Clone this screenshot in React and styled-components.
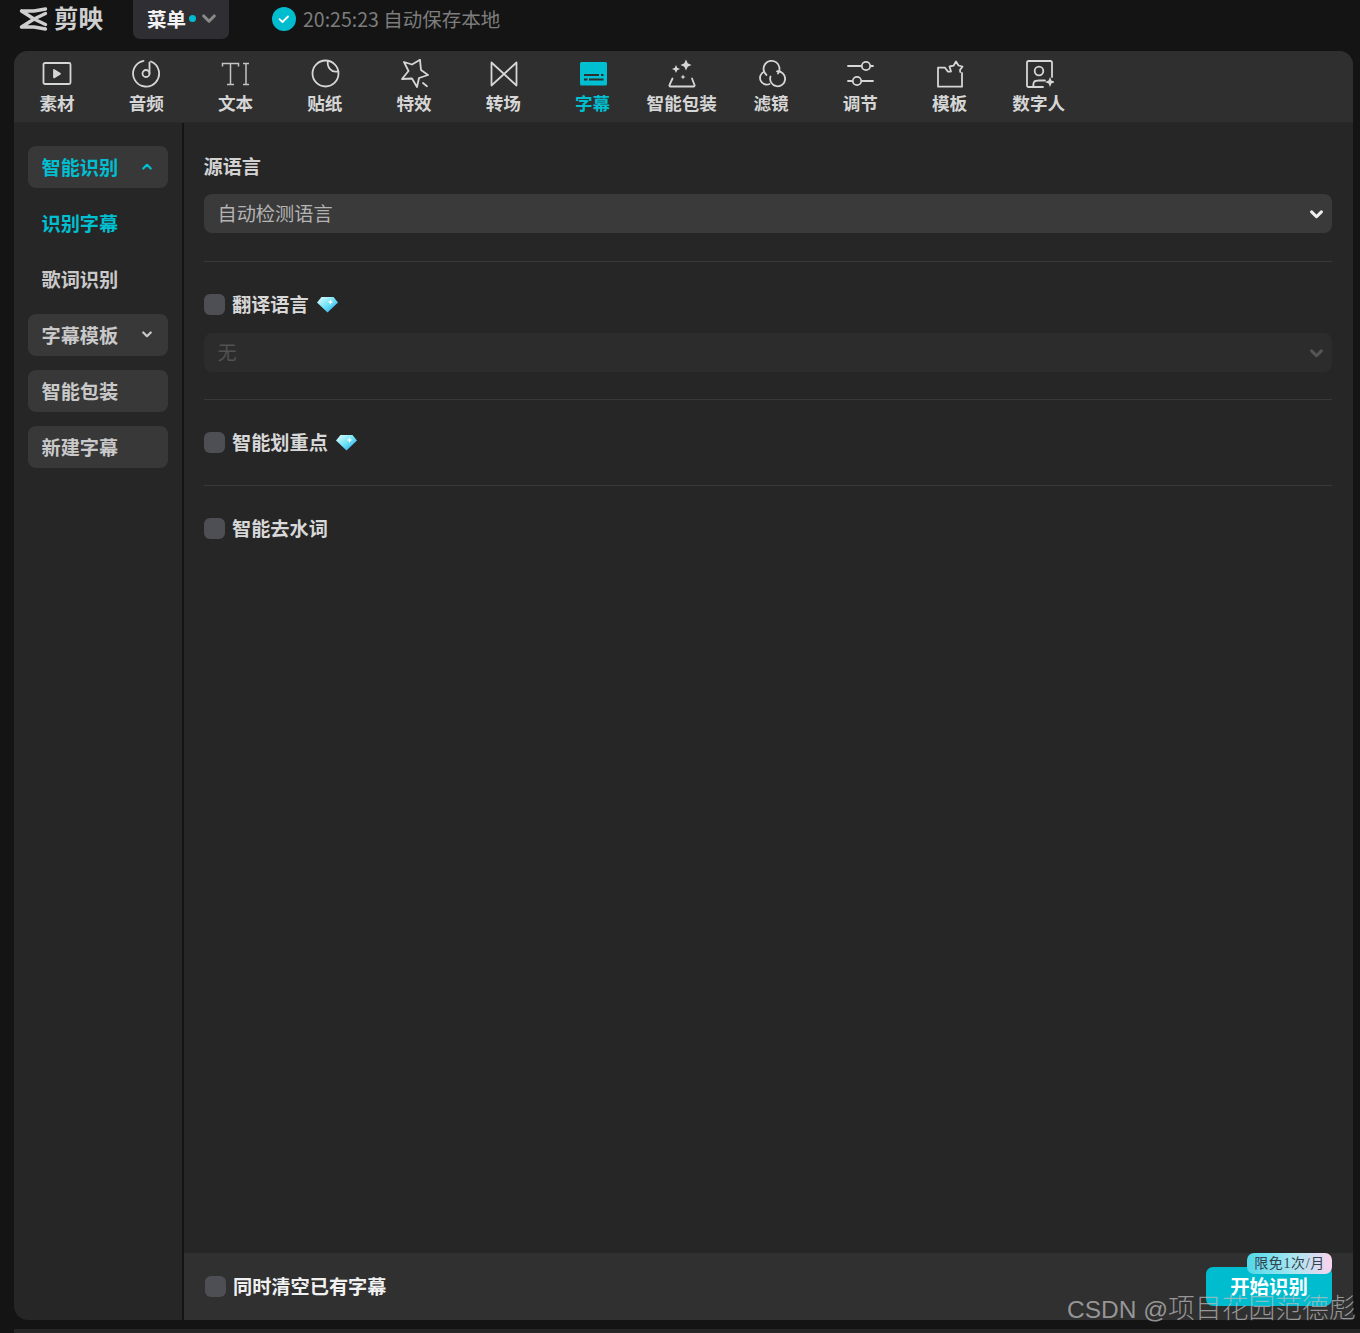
import React from "react";
import styled, { createGlobalStyle } from "styled-components";

const Global = createGlobalStyle`
  html, body { margin: 0; padding: 0; background: #141414; }
  body { font-family: "Noto Sans CJK SC", "Liberation Sans", sans-serif; }
  * { box-sizing: border-box; }
`;
const Page = styled.div`position: relative; width: 1360px; height: 1333px; overflow: hidden; background: #141414;`;
const TopBar = styled.header`height: 51px; display: flex; align-items: flex-start;`;
const Brand = styled.div`display: flex; align-items: center; gap: 6px; margin-left: 19px; height: 39px; width: 114px; padding-bottom: 2px; color: #cfcfcf; font-weight: 700; font-size: 24.5px; line-height: 1;`;
const MenuButton = styled.div`width: 96px; height: 39px; border-radius: 0 0 7px 7px; background: #2e2e33; display: flex; align-items: center; padding: 0 0 2px 14px; color: #f2f2f2; font-size: 19.5px; font-weight: 700;`;
const Dot = styled.span`width: 7px; height: 7px; border-radius: 50%; background: #00bcd0; margin: 0 6px 0 3px;`;
const Status = styled.div`display: flex; align-items: center; height: 39px; margin-left: 43px; gap: 7px; padding-bottom: 2px; color: #7d7d7d; font-size: 19.5px;`;
const Panel = styled.main`margin-left: 14px; width: 1339px; height: 1269px; border-radius: 14px 14px 0 14px; overflow: hidden; background: #262626; display: flex; flex-direction: column;`;
const Toolbar = styled.nav`height: 72px; flex: none; background: #2f2f2f; display: flex; gap: 3.25px; border-bottom: 1px solid #292929;`;
const Tool = styled.div`width: 86px; display: flex; flex-direction: column; align-items: center; padding-top: 8px; color: ${p => (p.$active ? "#00bfd0" : "#d6d6d6")}; font-size: 17.6px; font-weight: 700; line-height: 26px; white-space: nowrap;`;
const ToolIcon = styled.svg`width: 30px; height: 30px; display: block; margin-bottom: 1px; flex: none;`;
const Body = styled.div`flex: 1; display: flex; min-height: 0;`;
const Sidebar = styled.aside`width: 170px; flex: none; padding: 23px 14px 0; display: flex; flex-direction: column; gap: 14px; border-right: 2px solid #141414;`;
const SideItem = styled.div`height: 42px; border-radius: 8px; background: ${p => (p.$plain ? "transparent" : "#383838")}; color: ${p => (p.$active ? "#00bfd0" : "#c9c9c9")}; font-size: 19.2px; font-weight: 700; display: flex; align-items: center; justify-content: space-between; padding: 0 16px 1px 13.5px;`;
const Content = styled.section`flex: 1; display: flex; flex-direction: column; min-width: 0;`;
const Form = styled.div`flex: 1; padding: 29px 21px 0 20px;`;
const Title = styled.h3`margin: 0 0 0 -.5px; height: 28px; line-height: 28px; color: #d2d2d2; font-size: 19.2px; font-weight: 700;`;
const Select = styled.div`margin-top: ${p => p.$mt}px; height: 39px; border-radius: 8px; background: ${p => (p.$disabled ? "#2c2c2c" : "#3a3a3a")}; color: ${p => (p.$disabled ? "#525252" : "#b4b4b4")}; font-size: 19.2px; display: flex; align-items: center; justify-content: space-between; padding: 0 9px 1px 13.5px; svg { margin-top: 4px; }`;
const Divider = styled.hr`margin: ${p => p.$top}px 0 0; border: 0; height: 1px; background: #393939;`;
const OptionRow = styled.div`margin-top: ${p => p.$mt}px; height: 21px; display: flex; align-items: center; gap: 7px; color: ${p => (p.$bright ? "#f0f0f0" : "#d8d8d8")}; font-size: 19.2px; font-weight: 700;`;
const Check = styled.span`width: 21px; height: 21px; border-radius: 6px; background: #4e4e55; flex: none;`;
const OptionLabel = styled.span`margin: -1px 1.5px 0 0;`;
const Footer = styled.footer`height: 67px; flex: none; background: #303030; display: flex; align-items: center; justify-content: space-between; padding: 0 21px;`;
const StartButton = styled.div`position: relative; width: 126px; height: 39px; border-radius: 7px; padding-bottom: 2px; background: #00bccf; color: #fff; font-size: 19.4px; font-weight: 700; display: flex; align-items: center; justify-content: center;`;
const Badge = styled.span`position: absolute; right: 0; top: -14px; width: 85px; height: 21px; border-radius: 7px; background: linear-gradient(90deg, #4fd8e8, #a9e6f0 55%, #fbd3ee); color: #33424f; font-family: "Liberation Serif", "Noto Sans CJK SC", serif; font-size: 14px; font-weight: 400; line-height: 21px; letter-spacing: .6px; text-align: center;`;
const Watermark = styled.div`position: absolute; left: 1067px; top: 1290px; color: rgba(190,190,190,.72); font-family: "Liberation Sans", "Noto Sans CJK SC", sans-serif; font-size: 26.8px; font-weight: 300; line-height: 38px; white-space: nowrap;`;
const WatermarkLatin = styled.span`font-size: 24.5px;`;
const BottomStrip = styled.div`position: absolute; left: 14px; right: 0; top: 1329px; height: 4px; background: #262626;`;

const S = { fill: "none", stroke: "currentColor", strokeWidth: 1.8, strokeLinecap: "round", strokeLinejoin: "round" };
const tools = [
  ["素材", <g {...S}><rect x="1.500" y="4" width="27" height="21" rx="1.500" /><path d="M12 11l6 3.700-6 3.700z" fill="currentColor" /></g>],
  ["音频", <g {...S}><path d="M20 2.500A13 13 0 1 1 12.500 1.800" /><circle cx="15" cy="14.500" r="3.500" /><path d="M18.500 14.500V3.500" /></g>],
  ["文本", <g fill="none" stroke="#c4c4c4" strokeWidth="1.500"><path d="M1.500 7.500V4.500h16v3M9.500 4.500v21M6 25.500h7M22 4.500h6M25 4.500v21M22 25.500h6" /></g>],
  ["贴纸", <g {...S}><circle cx="15.500" cy="14.500" r="13" /><path d="M18 1.800c-1.500 6 3.500 12.500 10.300 10.500" /></g>],
  ["特效", <g {...S}><path d="M21 .8L22 11 29 16 20 19 18 28 13 19.500 3 20 9.500 12 5 3 13 5.500z" /><path d="M24 24l4 3.200" /></g>],
  ["转场", <g {...S}><path d="M3.500 3.500L28.500 26.500V3.500L3.500 26.500z" /></g>],
  ["字幕", <g><rect x="2" y="3" width="27" height="23.500" rx="1.500" fill="#00bfd0" /><path d="M6 16h15M23 16h2.500M6 20.500h3.500M11 20.500h14.500" stroke="#2f2f2f" strokeWidth="1.800" /></g>],
  ["智能包装", <g><path d="M19 .5l1.700 3.800L24.500 6l-3.800 1.700L19 11.500l-1.700-3.800L13.500 6l3.800-1.700zM9 6l1.200 2.800L13 10l-2.800 1.200L9 14l-1.200-2.800L5 10l2.800-1.200zM16 15.500l.8 1.700 1.700.8-1.700.8-.8 1.700-.8-1.700-1.700-.8 1.700-.8z" fill="currentColor" /><path {...S} d="M5.500 19.500L2.500 26a1 1 0 0 0 1 1.500h23a1 1 0 0 0 1-1.500L25 19.500" /></g>],
  ["滤镜", <g {...S}><path d="M10.500 16A8 8 0 1 1 22 14.500" /><path d="M14.500 17.500A7.500 7.500 0 1 0 21 12.300" /><path d="M8 12.800A6.500 6.500 0 1 0 13.500 25" /></g>],
  ["调节", <g {...S}><path d="M3 7h12.500M26 7h2M3 22h3.500M17 22h11" /><circle cx="21" cy="7" r="4.200" /><circle cx="12" cy="22" r="4.200" /></g>],
  ["模板", <g {...S}><path d="M15 12.700H13L10 8.700H3V27.700H27V14" /><path d="M16 12.500L14.500 7.500l4-.8L21 2.500l2.500 4 4 1-2.500 3.500.2 2" /></g>],
  ["数字人", <g {...S}><path d="M28 18V3.500a1.500 1.500 0 0 0-1.500-1.500H4.500A1.500 1.500 0 0 0 3 3.500v23A1.500 1.500 0 0 0 4.500 28H19" /><circle cx="15" cy="12" r="4.300" /><path d="M9.300 28c0-4.500 0-6.500 5.700-6.500H21" /><path d="M26 18l1.400 3.600L31 23l-3.600 1.400L26 28l-1.400-3.600L21 23l3.600-1.400z" fill="currentColor" stroke="none" /></g>],
];

const Chevron = ({ up, color = "currentColor", w = 12, sw = 2.2 }) => (
  <svg width={w} height={w * 0.7} viewBox="0 0 12 8" aria-hidden="true">
    <path d={up ? "M1.500 6.500L6 2l4.500 4.500" : "M1.500 1.500L6 6l4.500-4.500"} fill="none" stroke={color} strokeWidth={sw} strokeLinecap="round" strokeLinejoin="round" />
  </svg>
);

const Diamond = ({ id }) => (
  <svg width="21" height="17" viewBox="0 0 21 17" aria-hidden="true">
    <defs>
      <linearGradient id={id} x1="0" y1="0" x2="1" y2="1">
        <stop offset="0" stopColor="#e6fbff" />
        <stop offset=".5" stopColor="#6fe3f5" />
        <stop offset="1" stopColor="#1c9cf0" />
      </linearGradient>
    </defs>
    <path d="M4.500 1h12L21 6.500 10.500 16.500 0 6.500z" fill={`url(#${id})`} />
    <path d="M13.500 3l.8 2.200 2.200.8-2.200.8-.8 2.200-.8-2.200-2.200-.8 2.200-.8z" fill="#fff" />
  </svg>
);

const Logo = () => (
  <svg width="29" height="24" viewBox="0 0 29 24" aria-hidden="true">
    <path d="M2.500 4H15L26.500 2M2.500 20H15L26.500 22M2.500 4L15 12 2.500 20M26.500 6.500L15 12l11.500 5.500" fill="none" stroke="#cfcfcf" strokeWidth="3.400" strokeLinejoin="round" strokeLinecap="round" />
  </svg>
);

const StatusCheck = () => (
  <svg width="24" height="24" viewBox="0 0 24 24" aria-hidden="true">
    <circle cx="12" cy="12" r="12" fill="#00bccf" />
    <path d="M7.500 12.200l3 2.800 5.500-5.500" fill="none" stroke="#fff" strokeWidth="1.800" strokeLinecap="round" strokeLinejoin="round" />
  </svg>
);

export default function App() {
  return (
    <Page>
      <Global />
      <TopBar>
        <Brand><Logo />剪映</Brand>
        <MenuButton>菜单<Dot /><Chevron color="#8a8a8a" w={14} sw={2.6} /></MenuButton>
        <Status><StatusCheck />20:25:23 自动保存本地</Status>
      </TopBar>
      <Panel>
        <Toolbar>
          {tools.map(([label, icon]) => (
            <Tool key={label} $active={label === "字幕"}>
              <ToolIcon viewBox="0 0 30 30" aria-hidden="true">{icon}</ToolIcon>
              {label}
            </Tool>
          ))}
        </Toolbar>
        <Body>
          <Sidebar>
            <SideItem $active>智能识别<Chevron up w={10} sw={2.6} /></SideItem>
            <SideItem $plain $active>识别字幕</SideItem>
            <SideItem $plain>歌词识别</SideItem>
            <SideItem>字幕模板<Chevron w={10} sw={2.6} /></SideItem>
            <SideItem>智能包装</SideItem>
            <SideItem>新建字幕</SideItem>
          </Sidebar>
          <Content>
            <Form>
              <Title>源语言</Title>
              <Select $mt={14}>自动检测语言<Chevron color="#f0f0f0" w={13} sw={2.8} /></Select>
              <Divider $top={28} />
              <OptionRow $mt={32}><Check /><OptionLabel>翻译语言</OptionLabel><Diamond id="d1" /></OptionRow>
              <Select $mt={18} $disabled>无<Chevron color="#555" w={13} sw={2.8} /></Select>
              <Divider $top={27} />
              <OptionRow $mt={32}><Check /><OptionLabel>智能划重点</OptionLabel><Diamond id="d2" /></OptionRow>
              <Divider $top={32} />
              <OptionRow $mt={32}><Check /><OptionLabel>智能去水词</OptionLabel></OptionRow>
            </Form>
            <Footer>
              <OptionRow $mt={0} $bright><Check /><OptionLabel>同时清空已有字幕</OptionLabel></OptionRow>
              <StartButton>开始识别<Badge>限免1次/月</Badge></StartButton>
            </Footer>
          </Content>
        </Body>
      </Panel>
      <BottomStrip />
      <Watermark><WatermarkLatin>CSDN @</WatermarkLatin>项目花园范德彪</Watermark>
    </Page>
  );
}
